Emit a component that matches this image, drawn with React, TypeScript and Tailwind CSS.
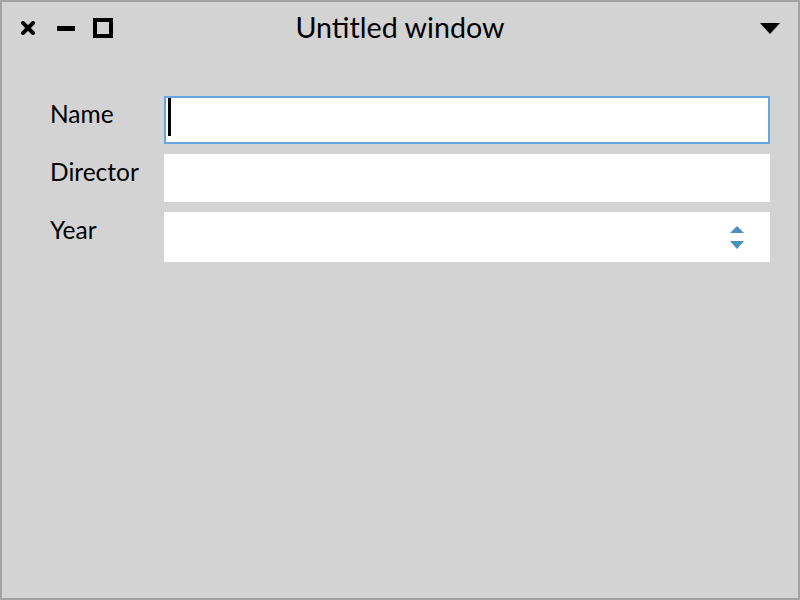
import { ReactNode } from "react";

const font = { fontFamily: "Lato, 'Open Sans', sans-serif" };

const FieldRow = ({ label, children }: { label: string; children: ReactNode }) => (
  <>
    <div className="pt-[3px] text-[24.5px] leading-[1.2] text-black">{label}</div>
    {children}
  </>
);

const App = () => {
  return (
    <div className="w-[800px] h-[600px] border-2 border-[#a3a3a3] bg-[#d3d3d3] flex flex-col" style={font}>
      {/* Title bar */}
      <div className="h-[52px] grid grid-cols-[1fr_auto_1fr] items-center">
        <div className="flex items-center pl-[19px]">
          <svg width="14" height="14" viewBox="0 0 14 14">
            <path d="M2 2 L12 12 M12 2 L2 12" stroke="black" strokeWidth="4" strokeLinecap="square" />
          </svg>
          <div className="ml-[22px] w-[18px] h-[5px] bg-black" />
          <div className="ml-[18px] w-[20px] h-[20px] border-4 border-black -mt-px" />
        </div>
        <div className="text-[28.7px] leading-none text-black -mt-[2px]">Untitled window</div>
        <div className="flex justify-end pr-[18px]">
          <svg width="20" height="11" viewBox="0 0 20 11">
            <path d="M0 0 H20 L10 11 Z" fill="black" />
          </svg>
        </div>
      </div>

      {/* Form */}
      <div className="grid grid-cols-[114px_1fr] gap-y-[10px] pt-[42px] pl-[48px] pr-[28px]">
        <FieldRow label="Name">
          <div className="h-[48px] bg-white border-2 border-[#66a6e3] flex">
            <div className="ml-[2px] w-[3px] h-[38px] bg-black" />
          </div>
        </FieldRow>
        <FieldRow label="Director">
          <div className="h-[48px] bg-white" />
        </FieldRow>
        <FieldRow label="Year">
          <div className="h-[50px] bg-white flex items-center justify-end pr-[26px]">
            <div className="flex flex-col items-center gap-[8px]">
              <svg width="14" height="7" viewBox="0 0 14 7">
                <path d="M0 7 L7 0 L14 7 Z" fill="#4a8fc2" />
              </svg>
              <svg width="14" height="8" viewBox="0 0 14 8">
                <path d="M0 0 H14 L7 8 Z" fill="#4a8fc2" />
              </svg>
            </div>
          </div>
        </FieldRow>
      </div>
    </div>
  );
};

export default App;
